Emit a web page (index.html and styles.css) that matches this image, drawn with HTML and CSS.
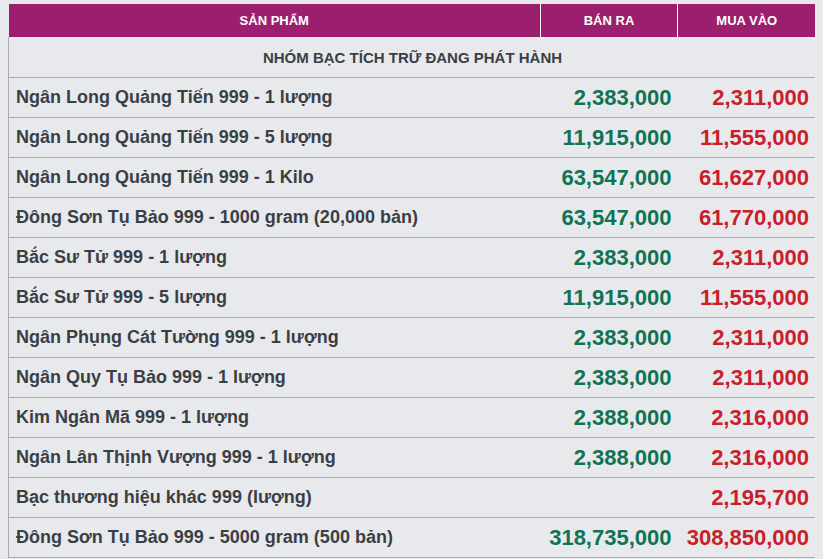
FILE: index.html
```html
<!DOCTYPE html>
<html lang="vi">
<head>
<meta charset="utf-8">
<title>Giá bạc</title>
<link rel="stylesheet" href="styles.css">
</head>
<body>
<table class="price-table">
  <colgroup>
    <col class="col-name">
    <col class="col-sell">
    <col class="col-buy">
  </colgroup>
  <thead>
    <tr>
      <th>SẢN PHẨM</th>
      <th>BÁN RA</th>
      <th>MUA VÀO</th>
    </tr>
  </thead>
  <tbody>
    <tr class="group"><td colspan="3">NHÓM BẠC TÍCH TRỮ ĐANG PHÁT HÀNH</td></tr>
    <tr><td class="name">Ngân Long Quảng Tiến 999 - 1 lượng</td><td class="sell">2,383,000</td><td class="buy">2,311,000</td></tr>
    <tr><td class="name">Ngân Long Quảng Tiến 999 - 5 lượng</td><td class="sell">11,915,000</td><td class="buy">11,555,000</td></tr>
    <tr><td class="name">Ngân Long Quảng Tiến 999 - 1 Kilo</td><td class="sell">63,547,000</td><td class="buy">61,627,000</td></tr>
    <tr><td class="name">Đông Sơn Tụ Bảo 999 - 1000 gram (20,000 bản)</td><td class="sell">63,547,000</td><td class="buy">61,770,000</td></tr>
    <tr><td class="name">Bắc Sư Tử 999 - 1 lượng</td><td class="sell">2,383,000</td><td class="buy">2,311,000</td></tr>
    <tr><td class="name">Bắc Sư Tử 999 - 5 lượng</td><td class="sell">11,915,000</td><td class="buy">11,555,000</td></tr>
    <tr><td class="name">Ngân Phụng Cát Tường 999 - 1 lượng</td><td class="sell">2,383,000</td><td class="buy">2,311,000</td></tr>
    <tr><td class="name">Ngân Quy Tụ Bảo 999 - 1 lượng</td><td class="sell">2,383,000</td><td class="buy">2,311,000</td></tr>
    <tr><td class="name">Kim Ngân Mã 999 - 1 lượng</td><td class="sell">2,388,000</td><td class="buy">2,316,000</td></tr>
    <tr><td class="name">Ngân Lân Thịnh Vượng 999 - 1 lượng</td><td class="sell">2,388,000</td><td class="buy">2,316,000</td></tr>
    <tr><td class="name">Bạc thương hiệu khác 999 (lượng)</td><td class="sell"></td><td class="buy">2,195,700</td></tr>
    <tr><td class="name">Đông Sơn Tụ Bảo 999 - 5000 gram (500 bản)</td><td class="sell">318,735,000</td><td class="buy">308,850,000</td></tr>
  </tbody>
</table>
</body>
</html>
```
FILE: styles.css
```css
html, body {
  background: #e8e9ed;
}
body {
  margin: 4px 8px 0 8px;
  font-family: "Liberation Sans", Arial, sans-serif;
  color: #3a3f44;
}
.price-table {
  width: 807px;
  border-collapse: collapse;
  table-layout: fixed;
}
.col-name { width: 532px; }
.col-sell { width: 137px; }
.col-buy { width: 138px; }
.price-table th {
  background: #9c1f6f;
  color: #fff;
  font-size: 13px;
  font-weight: bold;
  height: 33px;
  padding: 0;
  text-align: center;
  border-left: 1px solid #fff;
}
.price-table th:first-child {
  border-left: none;
}
.price-table td {
  height: 39px;
  padding: 0 6px 0 7px;
  border-bottom: 1px solid #a9abb0;
  font-weight: bold;
}
.price-table td:first-child {
  border-left: 1px solid #a9abb0;
}
.price-table td:last-child {
  border-right: 1px solid #a9abb0;
}
.group td {
  height: 40px;
  text-align: center;
  font-size: 15px;
  color: #3a3f44;
}
.name {
  font-size: 18px;
}
.sell, .buy {
  text-align: right;
  font-size: 22px;
}
.sell { color: #107353; }
.buy { color: #c8202a; }
```
